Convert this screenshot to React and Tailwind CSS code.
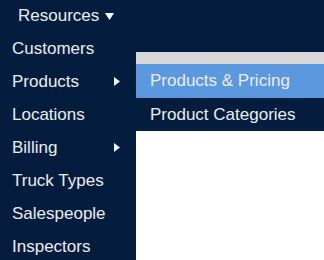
import React from 'react';

const items = [
  { label: 'Customers' },
  { label: 'Products', sub: true },
  { label: 'Locations' },
  { label: 'Billing', sub: true },
  { label: 'Truck Types' },
  { label: 'Salespeople' },
  { label: 'Inspectors' },
];

function RightArrow() {
  return (
    <svg width="6" height="9" viewBox="0 0 6 9" className="fill-[#f2f2f2]">
      <path d="M0 0 L6 4.5 L0 9 Z" />
    </svg>
  );
}

export default function App() {
  return (
    <div className="relative w-[324px] h-[260px] overflow-hidden bg-white font-['Liberation_Sans',Arial,sans-serif] text-[17px] text-[#ececec]">
      <nav className="h-[52px] bg-[#041d3e]">
        <div className="flex items-center h-[32px] pl-[18px] gap-[6px]">
          <span>Resources</span>
          <svg width="9" height="7" viewBox="0 0 9 7" className="fill-white mt-[1px]">
            <path d="M0 0 H9 L4.5 7 Z" />
          </svg>
        </div>
      </nav>
      <div className="h-[12px] bg-[#d8d8d8]"></div>

      <ul className="absolute left-0 top-[32px] w-[136px] h-[240px] bg-[#041d3e]">
        {items.map((it) => (
          <li key={it.label} className="flex items-center justify-between h-[33px] pl-[12px] pr-[16px]">
            <span>{it.label}</span>
            {it.sub && <RightArrow />}
          </li>
        ))}
      </ul>

      <ul className="absolute left-[136px] top-[64px] w-[220px] bg-[#041d3e]">
        <li className="flex items-center h-[34px] pl-[14px] bg-[#5c98dd]">Products &amp; Pricing</li>
        <li className="flex items-center h-[33px] pl-[14px]">Product Categories</li>
      </ul>
    </div>
  );
}
